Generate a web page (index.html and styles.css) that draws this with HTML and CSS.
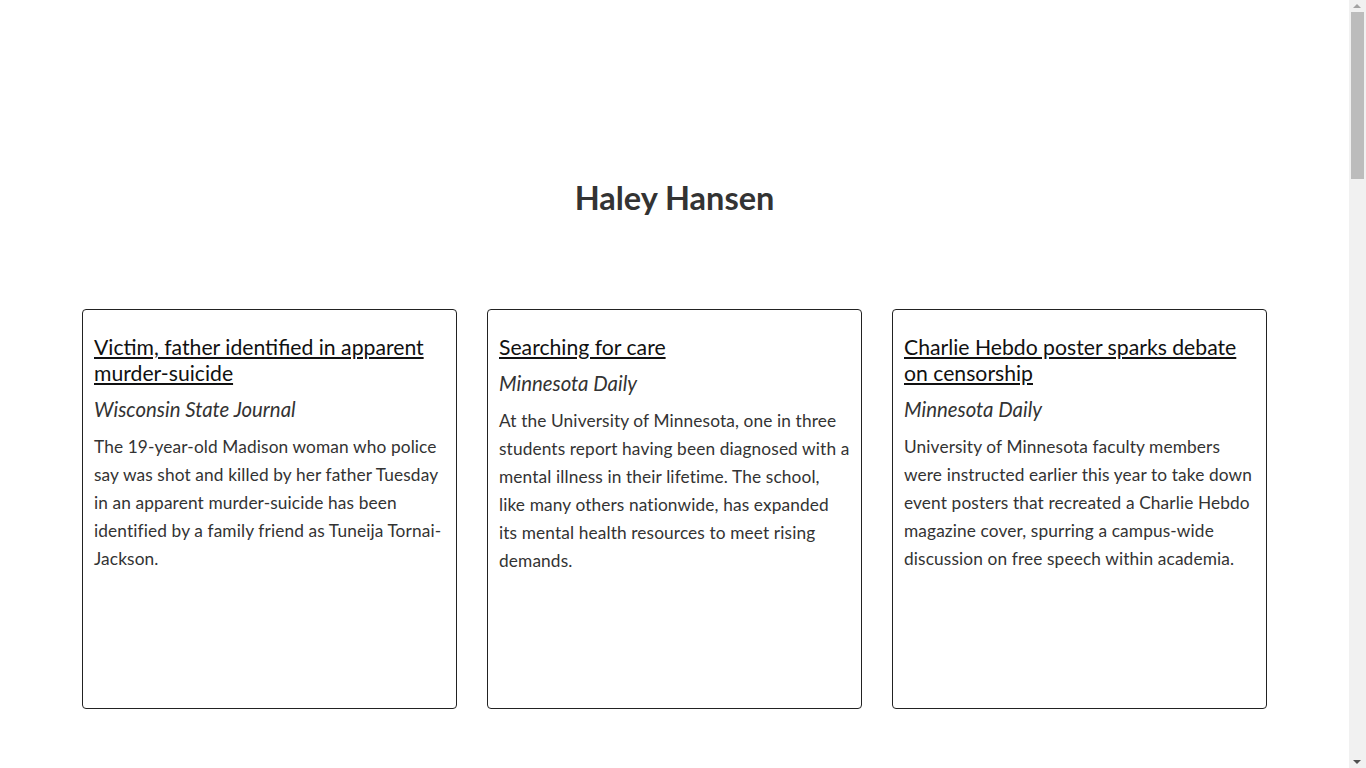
FILE: index.html
```html
<!DOCTYPE html>
<html lang="en">
<head>
<meta charset="utf-8">
<title>Haley Hansen</title>
<link rel="stylesheet" href="styles.css">
</head>
<body>
<main class="page">
  <header class="header">
    <h1 class="name">Haley Hansen</h1>
  </header>
  <section class="cards">
    <article class="card">
      <h2 class="card-title"><a href="#">Victim, father identified in apparent murder-suicide</a></h2>
      <p class="card-source">Wisconsin State Journal</p>
      <p class="card-text">The 19-year-old Madison woman who police say was shot and killed by her father Tuesday in an apparent murder-suicide has been identified by a family friend as Tuneija Tornai-Jackson.</p>
    </article>
    <article class="card">
      <h2 class="card-title"><a href="#">Searching for care</a></h2>
      <p class="card-source">Minnesota Daily</p>
      <p class="card-text">At the University of Minnesota, one in three students report having been diagnosed with a mental illness in their lifetime. The school, like many others nationwide, has expanded its mental health resources to meet rising demands.</p>
    </article>
    <article class="card">
      <h2 class="card-title"><a href="#">Charlie Hebdo poster sparks debate on censorship</a></h2>
      <p class="card-source">Minnesota Daily</p>
      <p class="card-text">University of Minnesota faculty members were instructed earlier this year to take down event posters that recreated a Charlie Hebdo magazine cover, spurring a campus-wide discussion on free speech within academia.</p>
    </article>
  </section>
</main>
<div class="scrollbar" aria-hidden="true">
  <span class="scroll-arrow scroll-up"></span>
  <span class="scroll-thumb"></span>
  <span class="scroll-arrow scroll-down"></span>
</div>
</body>
</html>
```
FILE: styles.css
```css
html, body {
  margin: 0;
  padding: 0;
  background: #fff;
}
body {
  font-family: Lato, "Open Sans", sans-serif;
  color: #333;
}
.page {
  margin-right: 17px;
  padding: 176px 0 80px;
}
.header {
  text-align: center;
  margin-bottom: 89px;
}
.name {
  margin: 0;
  font-size: 32.5px;
  line-height: 44px;
  font-weight: 700;
  color: #333;
}
.cards {
  display: grid;
  grid-template-columns: repeat(3, 375px);
  column-gap: 30px;
  justify-content: center;
}
.card {
  height: 400px;
  box-sizing: border-box;
  border: 1px solid #222;
  border-radius: 4px;
  padding: 24px 11px 11px 11px;
}
.card-title {
  margin: 0;
  font-size: 21.2px;
  line-height: 26px;
  font-weight: 400;
}
.card-title a {
  color: #111;
  text-decoration: underline;
}
.card-source {
  margin: 10px 0 0;
  font-size: 20.4px;
  line-height: 26px;
  font-style: italic;
  color: #333;
}
.card-text {
  margin: 11px 0 0;
  font-size: 17.3px;
  letter-spacing: 0.12px;
  line-height: 28px;
  color: #333;
}
.scrollbar {
  position: fixed;
  top: 0;
  right: 0;
  width: 17px;
  height: 100vh;
  background: #f1f1f1;
}
.scroll-thumb {
  position: absolute;
  left: 2px;
  top: 12px;
  width: 13px;
  height: 167px;
  background: #bcbcbc;
}
.scroll-arrow {
  position: absolute;
  left: 4px;
  width: 0;
  height: 0;
  border-left: 4.5px solid transparent;
  border-right: 4.5px solid transparent;
}
.scroll-up {
  top: 4px;
  border-bottom: 4px solid #a3a3a3;
}
.scroll-down {
  bottom: 4px;
  border-top: 4px solid #505050;
}
```
